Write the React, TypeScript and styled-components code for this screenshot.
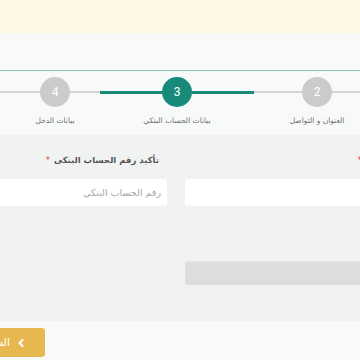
import React from "react";
import styled, { createGlobalStyle } from "styled-components";
import { ChevronLeft } from "lucide-react";

const Global = createGlobalStyle`
  html, body { margin: 0; padding: 0; width: 360px; height: 360px; overflow: hidden; background: #f8f9f9; }
  #root { width: 360px; height: 360px; overflow: hidden; }
`;

const Screen = styled.div`
  width: 360px;
  height: 360px;
  overflow: hidden;
  font-family: "DejaVu Sans", "Noto Sans", sans-serif;
`;

const Page = styled.div`
  width: 486px;
  margin-left: -30px;
  display: flex;
  flex-direction: column;
`;

const Notice = styled.div`
  height: 33px;
  background: #fcf8e3;
`;

const Header = styled.div`
  height: 37px;
  background: #f8f9f9;
  border-bottom: 1px solid #86c6bd;
`;

const Stepper = styled.div`
  height: 64px;
  background: #f8f9f9;
  display: flex;
  align-items: flex-start;
  padding-top: 6px;
  box-sizing: border-box;
`;

const Step = styled.div<{ $w: number }>`
  width: ${(p) => p.$w}px;
  flex-shrink: 0;
  display: flex;
  flex-direction: column;
  align-items: stretch;
`;

const Track = styled.div`
  height: 30px;
  display: flex;
  align-items: center;
`;

const Segment = styled.div<{ $active?: boolean }>`
  flex: 1;
  height: ${(p) => (p.$active ? 3 : 2)}px;
  background: ${(p) => (p.$active ? "#178a7a" : "#d3d3d3")};
`;

const Circle = styled.div<{ $active?: boolean }>`
  width: 30px;
  height: 30px;
  border-radius: 50%;
  flex-shrink: 0;
  background: ${(p) => (p.$active ? "#178a7a" : "#cbcbcb")};
  color: #fff;
  font-family: Roboto, "Noto Sans", sans-serif;
  font-size: 12px;
  display: flex;
  align-items: center;
  justify-content: center;
`;

const StepLabel = styled.div`
  margin-top: 8px;
  text-align: center;
  font-size: 7.5px;
  line-height: 12px;
  color: #6f6f6f;
  white-space: nowrap;
`;

const FormArea = styled.div`
  height: 186px;
  background: #f1f2f2;
  display: flex;
  gap: 18px;
  padding-top: 18px;
  box-sizing: border-box;
`;

const Column = styled.div<{ $w?: number }>`
  ${(p) => (p.$w ? `width: ${p.$w}px; flex-shrink: 0;` : "flex: 1;")}
  display: flex;
  flex-direction: column;
`;

const Label = styled.div`
  height: 14px;
  line-height: 14px;
  padding-right: 8px;
  font-size: 8.5px;
  font-weight: bold;
  color: #555;
  white-space: nowrap;
  margin-bottom: 12px;
`;

const Star = styled.span`
  color: #e2434b;
  margin-right: 4px;
  font-weight: normal;
`;

const Input = styled.input`
  height: 27px;
  box-sizing: border-box;
  border: none;
  border-radius: 3px;
  background: #fff;
  padding: 0 6px;
  font-family: "DejaVu Sans", sans-serif;
  font-size: 9.5px;
  color: #555;
  outline: none;
  direction: rtl;
  &::placeholder { color: #a9a9a9; }
`;

const Bar = styled.div`
  margin-top: 55px;
  height: 24px;
  border-radius: 2px;
  background: #dddddb;
  border-top: 1px solid #e6e6e4;
  box-sizing: border-box;
`;

const Footer = styled.div`
  height: 39px;
  background: #f8f9f9;
  display: flex;
  justify-content: flex-end;
  align-items: flex-start;
  padding-top: 7px;
  box-sizing: border-box;
`;

const PrevButton = styled.button`
  width: 75px;
  height: 29px;
  border: none;
  border-radius: 3px;
  background: #e7b84f;
  color: #fff;
  font-family: "DejaVu Sans", sans-serif;
  font-size: 11px;
  display: flex;
  align-items: center;
  gap: 5px;
  padding: 0 18px 0 0;
  direction: rtl;
  white-space: nowrap;
`;

const steps = [
  { n: 1, w: 76, label: "البيانات الشخصية", active: false },
  { n: 2, w: 126, label: "العنوان و التواصل", active: false },
  { n: 3, w: 154, label: "بيانات الحساب البنكي", active: true },
  { n: 4, w: 90, label: "بيانات الدخل", active: false },
];

export default function App() {
  return (
    <Screen>
      <Global />
      <Page dir="rtl">
        <Notice />
        <Header />
        <Stepper>
          {steps.map((s) => (
            <Step key={s.n} $w={s.w}>
              <Track>
                <Segment $active={s.active} />
                <Circle $active={s.active}>{s.n}</Circle>
                <Segment $active={s.active} />
              </Track>
              <StepLabel>{s.label}</StepLabel>
            </Step>
          ))}
          <Step $w={40}>
            <Track>
              <Segment />
            </Track>
          </Step>
        </Stepper>
        <FormArea>
          <Column>
            <Label>
              رقم الحساب البنكى<Star>*</Star>
            </Label>
            <Input />
            <Bar />
          </Column>
          <Column $w={197}>
            <Label>
              تأكيد رقم الحساب البنكى<Star>*</Star>
            </Label>
            <Input placeholder="رقم الحساب البنكي" />
          </Column>
        </FormArea>
        <Footer>
          <PrevButton>
            <ChevronLeft size={12} strokeWidth={4} />
            السابق
          </PrevButton>
        </Footer>
      </Page>
    </Screen>
  );
}
